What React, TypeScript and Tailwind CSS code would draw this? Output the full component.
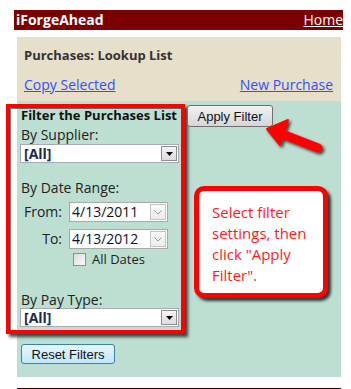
import React from "react";

const SEGOE = { fontFamily: '"Open Sans", "Noto Sans", sans-serif' };
const ARIAL = { fontFamily: '"Liberation Sans", Arial, sans-serif' };

function Select() {
  return (
    <div className="flex h-[19px] w-[159px] items-center border border-[#a5acb5] bg-white pl-[3px]">
      <span className="flex-1 text-[14px] font-bold leading-none text-[#1c2a48]">[All]</span>
      <span className="mr-[1px] flex h-[15px] w-[16px] items-center justify-center border border-[#8d8d8d] bg-gradient-to-b from-[#f4f4f4] to-[#dcdcdc]">
        <svg width="7" height="4" viewBox="0 0 7 4">
          <path d="M0 0h7L3.5 4z" fill="#000" />
        </svg>
      </span>
    </div>
  );
}

function DateInput({ value }: { value: string }) {
  return (
    <div className="flex h-[20px] w-[99px] items-center border border-[#a9a9a9] bg-white pl-[2px]">
      <span className="flex-1 text-[14px] leading-none text-[#111]">{value}</span>
      <span className="mr-[1px] flex h-[16px] w-[16px] items-center justify-center border border-[#c4c4c4] bg-gradient-to-b from-[#fbfbfb] to-[#ececec]">
        <svg width="8" height="5" viewBox="0 0 8 5">
          <path d="M0.5 0.5L4 4L7.5 0.5" fill="none" stroke="#9a9a9a" strokeWidth="1" />
        </svg>
      </span>
    </div>
  );
}

export default function App() {
  return (
    <div className="relative h-[389px] w-[351px] overflow-hidden bg-white" style={SEGOE}>
      {/* header */}
      <div className="ml-[14px] mt-[10px] flex h-[20px] w-[329px] items-center justify-between bg-[#7b0000] pl-[2px] text-white">
        <span className="text-[14px] font-bold leading-none">iForgeAhead</span>
        <span className="text-[14px] leading-none underline">Home</span>
      </div>

      {/* title panel */}
      <div className="ml-[17px] mt-[7px] h-[64px] w-[324px] bg-[#e6dfca] px-[7px]">
        <div className="pt-[10px] text-[13px] font-bold leading-[16px] text-[#333]">Purchases: Lookup List</div>
        <div className="mt-[13px] flex justify-between pr-[1px] text-[14px] leading-[18px] text-[#3050ff]">
          <span className="underline">Copy Selected</span>
          <span className="underline">New Purchase</span>
        </div>
      </div>

      {/* filter panel */}
      <div className="ml-[17px] h-[276px] w-[324px] bg-[#bddfd2] pt-[3px]">
        <div className="flex items-start">
          <div className="ml-[-11px] w-[179px] border-4 border-[#ff0000] pb-[3px] pl-[10px] shadow-[3px_3px_3px_rgba(0,0,0,0.7),inset_1px_1px_0_rgba(0,0,0,0.5)]">
            <div className="pl-[1px] text-[13px] font-bold leading-[14px] text-[#111]">Filter the Purchases List</div>
            <div className="mt-[4px] pl-[1px] text-[14px] leading-[18px] text-[#222]">By Supplier:</div>
            <Select />
            <div className="mt-[16px] pl-[1px] text-[14px] leading-[18px] text-[#222]">By Date Range:</div>
            <div className="mt-[5px] flex items-center">
              <span className="w-[43px] pr-[1px] text-right text-[14px] leading-none text-[#222]">From:</span>
              <span className="ml-[6px]">
                <DateInput value="4/13/2011" />
              </span>
            </div>
            <div className="mt-[7px] flex items-center">
              <span className="w-[43px] pr-[1px] text-right text-[14px] leading-none text-[#222]">To:</span>
              <span className="ml-[6px]">
                <DateInput value="4/13/2012" />
              </span>
            </div>
            <div className="ml-[53px] mt-[4px] flex items-center">
              <span className="h-[13px] w-[13px] border border-[#8e8f8f] bg-gradient-to-br from-[#dcdcdc] to-[#fbfbfb]" />
              <span className="ml-[6px] text-[13px] leading-none text-[#222]">All Dates</span>
            </div>
            <div className="mt-[26px] pl-[1px] text-[14px] leading-[16px] text-[#222]">By Pay Type:</div>
            <Select />
          </div>
          <button
            className="ml-[2px] mt-[1px] h-[22px] w-[86px] rounded-[3px] border border-[#707070] bg-gradient-to-b from-[#f2f2f2] to-[#d6d6d6] text-[13px] leading-none text-[#111]"
            style={ARIAL}
          >
            Apply Filter
          </button>
        </div>
        <button
          className="ml-[4px] mt-[10px] h-[20px] w-[94px] rounded-[3px] border border-[#3c7fb1] bg-gradient-to-b from-[#eaf6fd] to-[#bee6fd] text-[13px] leading-none text-[#111]"
          style={ARIAL}
        >
          Reset Filters
        </button>
      </div>

      <div className="ml-[17px] mt-[11px] h-[1px] w-[324px] bg-[#2a0000]" />

      {/* callout */}
      <div className="absolute left-[194px] top-[186px] h-[112px] w-[134px] rounded-[10px] border-[5px] border-[#ff0000] bg-white pl-[13px] pt-[11px] text-[15px] leading-[21px] text-[#ff1a1a] shadow-[3px_3px_3px_rgba(0,0,0,0.75)]">
        Select filter
        <br />
        settings, then
        <br />
        click "Apply
        <br />
        Filter".
      </div>

      {/* arrow */}
      <svg className="pointer-events-none absolute left-0 top-0" width="351" height="389" viewBox="0 0 351 389">
        <defs>
          <filter id="sh" x="-20%" y="-20%" width="150%" height="150%">
            <feDropShadow dx="2" dy="2" stdDeviation="1.5" floodColor="#000" floodOpacity="0.7" />
          </filter>
        </defs>
        <g filter="url(#sh)">
          <line x1="318" y1="148" x2="282" y2="134" stroke="#ff0000" strokeWidth="9" strokeLinecap="round" />
          <path d="M267 129 L288 120 L280 145 Z" fill="#ff0000" stroke="#ff0000" strokeWidth="2" strokeLinejoin="round" />
        </g>
      </svg>
    </div>
  );
}
